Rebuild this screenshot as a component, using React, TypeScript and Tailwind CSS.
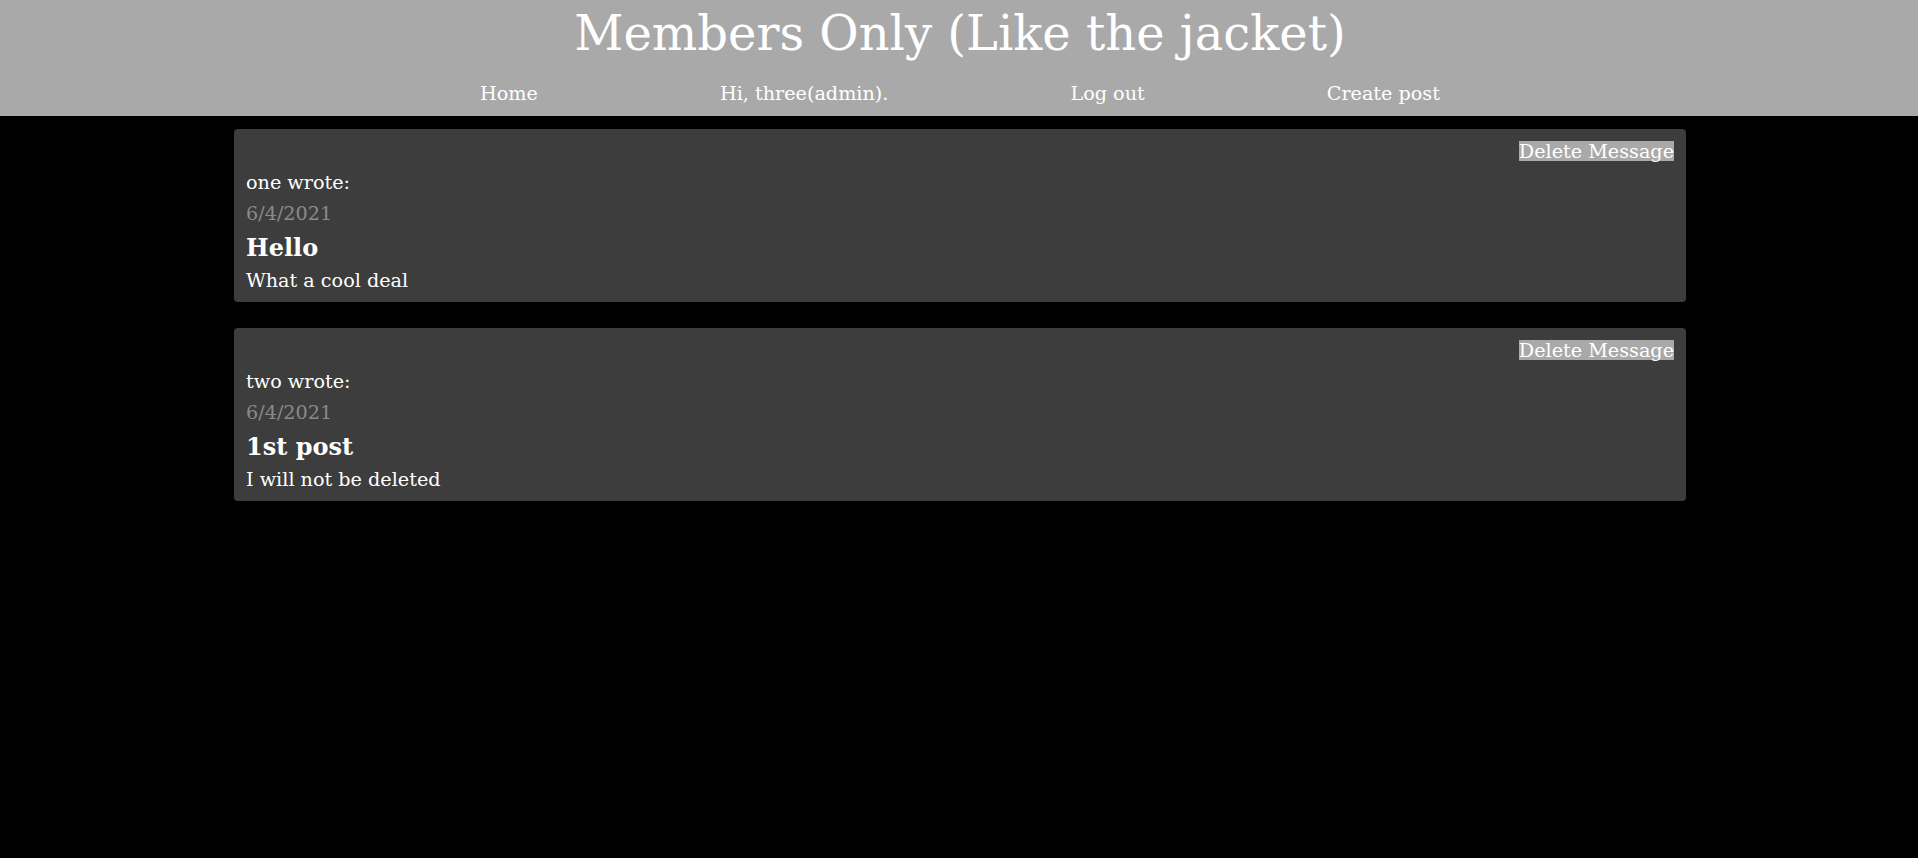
const messages = [
  { author: 'one', date: '6/4/2021', title: 'Hello', body: 'What a cool deal' },
  { author: 'two', date: '6/4/2021', title: '1st post', body: 'I will not be deleted' },
];

const navLinks = ['Home', 'Hi, three(admin).', 'Log out', 'Create post'];

const Header = () => {
  return (
    <header className="h-[116px] bg-[#a9a9a9] pt-[5px] pl-[2px] text-white">
      <h1 className="text-center text-[48px] leading-[56px]">Members Only (Like the jacket)</h1>
      <nav className="mt-[21px] flex justify-center gap-[182px] text-[19.2px] leading-[24px]">
        {navLinks.map((link) => (
          <a key={link} href="#" className="text-white">
            {link}
          </a>
        ))}
      </nav>
    </header>
  );
};

const MessageCard = ({ author, date, title, body }: (typeof messages)[number]) => {
  return (
    <div className="rounded-[4px] bg-[#3d3d3d] px-3 pt-3 pb-[9px] text-[19.2px] text-white">
      <div className="flex h-5 justify-end">
        <button className="bg-[#a9a9a9] leading-[21px] text-white">Delete Message</button>
      </div>
      <p className="mt-[10px] leading-[24px]">{author} wrote:</p>
      <p className="mt-[7px] leading-[24px] text-[#8a8a8a]">{date}</p>
      <h3 className="mt-[6px] text-[24px] font-bold leading-[32px]">{title}</h3>
      <p className="mt-[5px] leading-[24px]">{body}</p>
    </div>
  );
};

export default function App() {
  return (
    <div className="min-h-screen bg-black" style={{ fontFamily: '"DejaVu Serif", serif' }}>
      <Header />
      <div className="pl-[2px]">
        <main className="mx-auto flex w-[1452px] flex-col gap-[26px] pt-[13px]">
          {messages.map((m) => (
            <MessageCard key={m.title} {...m} />
          ))}
        </main>
      </div>
    </div>
  );
}
